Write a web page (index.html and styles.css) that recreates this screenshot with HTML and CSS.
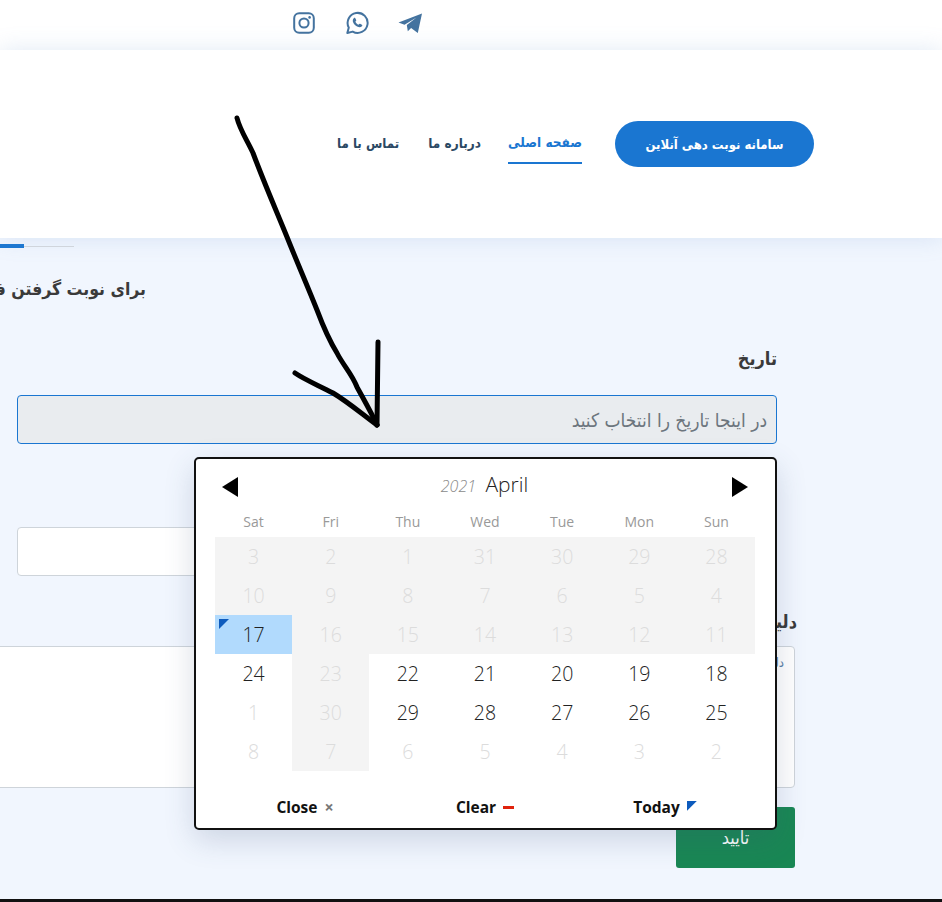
FILE: index.html
```html
<!DOCTYPE html>
<html lang="fa">
<head>
<meta charset="utf-8">
<title>سامانه نوبت دهی آنلاین</title>
<link rel="stylesheet" href="styles.css">
</head>
<body>
<div class="topbar">
  <svg class="social" viewBox="0 0 24 24" width="24" height="24"><rect x="2.2" y="2.2" width="19.6" height="19.6" rx="5" fill="none" stroke="#44739f" stroke-width="2"/><circle cx="12" cy="12" r="4.6" fill="none" stroke="#44739f" stroke-width="2"/><circle cx="17.6" cy="6.4" r="1.3" fill="#44739f"/></svg>
  <svg class="social" viewBox="0 0 24 24" width="24" height="24"><path d="M2.3 22l1.5-5.4A10 10 0 1 1 7.7 20.6z" fill="none" stroke="#44739f" stroke-width="2" stroke-linejoin="round"/><path d="M8.8 7.2c.4-.5 1.200-.5 1.500 0l.9 1.800c.2.400 0 .8-.8 1.700.7 1.400 1.600 2.300 3 3 .9-.9 1.300-1.100 1.700-.9l1.800.9c.5.300.5 1.100 0 1.500-1 1-2.500 1.300-4.200.6-2-.8-3.800-2.500-4.600-4.500-.6-1.600-.3-3.100.7-4.100z" fill="#44739f"/></svg>
  <svg class="social" viewBox="0 0 24 24" width="24" height="24"><path d="M0.500 11.500L24 2.500 19.800 22l-6.700-5-3.300 3.300-1-6.300L18.500 6.500 6.500 13.800z" fill="#44739f"/></svg>
</div>
<header class="header">
  <nav class="nav" dir="rtl">
    <a class="cta">سامانه نوبت دهی آنلاین</a>
    <a class="link active">صفحه اصلی</a>
    <a class="link">درباره ما</a>
    <a class="link">تماس با ما</a>
  </nav>
</header>
<main class="main">
  <div class="progress"><div class="progress-fill"></div></div>
  <div class="intro" dir="rtl">برای نوبت گرفتن فرم را پر کنید</div>
  <section class="field" dir="rtl">
    <div class="label">تاریخ</div>
    <div class="input readonly">در اینجا تاریخ را انتخاب کنید</div>
  </section>
  <section class="field second" dir="rtl">
    <div class="input"></div>
  </section>
  <section class="reason" dir="rtl">
    <div class="label">دلیل مراجعه</div>
    <div class="textarea">دلیل مراجعه خود را بنویسید</div>
    <a class="submit">تایید</a>
  </section>
</main>
<div class="bottomline"></div>

<div class="calendar">
  <div class="cal-head">
    <span class="tri tri-left"></span>
    <div class="cal-title"><em>2021</em> <span>April</span></div>
    <span class="tri tri-right"></span>
  </div>
  <div class="cal-grid">
    <div class="wd">Sat</div><div class="wd">Fri</div><div class="wd">Thu</div><div class="wd">Wed</div><div class="wd">Tue</div><div class="wd">Mon</div><div class="wd">Sun</div>
    <div class="d off">3</div><div class="d off">2</div><div class="d off">1</div><div class="d off">31</div><div class="d off">30</div><div class="d off">29</div><div class="d off">28</div>
    <div class="d off">10</div><div class="d off">9</div><div class="d off">8</div><div class="d off">7</div><div class="d off">6</div><div class="d off">5</div><div class="d off">4</div>
    <div class="d today">17</div><div class="d off">16</div><div class="d off">15</div><div class="d off">14</div><div class="d off">13</div><div class="d off">12</div><div class="d off">11</div>
    <div class="d">24</div><div class="d off">23</div><div class="d">22</div><div class="d">21</div><div class="d">20</div><div class="d">19</div><div class="d">18</div>
    <div class="d out">1</div><div class="d off">30</div><div class="d">29</div><div class="d">28</div><div class="d">27</div><div class="d">26</div><div class="d">25</div>
    <div class="d out">8</div><div class="d off">7</div><div class="d out">6</div><div class="d out">5</div><div class="d out">4</div><div class="d out">3</div><div class="d out">2</div>
  </div>
  <div class="cal-foot">
    <div class="btn">Close <span class="x">×</span></div>
    <div class="btn">Clear <span class="dash"></span></div>
    <div class="btn">Today <span class="corner"></span></div>
  </div>
</div>

<svg class="scribble" width="942" height="902" viewBox="0 0 942 902">
  <path d="M237 118C240 130 247 140 253 153C265 185 276 210 287 237C297 262 307 285 317 310C323 326 329 340 337 353C343 365 352 374 357 387C364 400 371 412 377 425" />
  <path d="M378 342L377 425" />
  <path d="M295 373C305 380 320 386 333 393C348 402 362 414 377 425" />
</svg>
</body>
</html>
```
FILE: styles.css
```css
* { box-sizing: border-box; }
html, body { margin: 0; padding: 0; height: 902px; overflow: hidden; }
body {
  width: 942px;
  position: relative;
  background: #f1f6fe;
  font-family: "DejaVu Sans Condensed", "DejaVu Sans", sans-serif;
  color: #3a3a3a;
}
.topbar {
  height: 50px;
  background: #fff;
  display: flex;
  align-items: flex-start;
  gap: 29px;
  padding: 11px 0 0 292px;
}
.social { display: block; }
.header {
  position: relative;
  z-index: 1;
  height: 188px;
  background: #fff;
  box-shadow: 0 0 22px rgba(120, 160, 210, 0.22);
  display: flex;
  justify-content: flex-end;
  padding: 71px 128px 0 0;
}
.nav {
  display: flex;
  align-items: flex-start;
  height: 46px;
  font-weight: 700;
  font-size: 13.5px;
}
.cta {
  width: 199px;
  height: 46px;
  border-radius: 23px;
  background: #1a76d1;
  color: #fff;
  display: flex;
  align-items: center;
  justify-content: center;
  margin-left: 33px;
  font-size: 13px;
}
.link {
  height: 43px;
  display: flex;
  align-items: center;
  padding-top: 1px;
  color: #2c4964;
  margin-left: 29px;
  font-size: 13.5px;
}
.link:last-child { font-size: 13.2px; }
.link.active {
  color: #1a76d1;
  border-bottom: 2px solid #1a76d1;
  margin-left: 27px;
}
.main { height: 661px; overflow: visible; }
.progress {
  position: relative;
  width: 74px;
  height: 1px;
  margin-top: 8px;
  background: #d5d9de;
}
.progress-fill {
  position: absolute;
  left: 0;
  top: -2px;
  width: 24px;
  height: 4px;
  background: #1a76d1;
}
.intro {
  width: 146px;
  margin-top: 32px;
  height: 20px;
  line-height: 20px;
  font-size: 17.5px;
  font-weight: 700;
  white-space: nowrap;
}
.field { margin: 49px 165px 0 17px; }
.label {
  font-size: 18px;
  font-weight: 700;
  line-height: 22px;
  height: 22px;
  white-space: nowrap;
}
.input {
  margin-top: 25px;
  height: 49px;
  border: 1px solid #ced4da;
  border-radius: 4px;
  background: #fff;
  padding: 0 9px;
  font-size: 19px;
  line-height: 49px;
  color: #6c757d;
}
.input.readonly { background: #e9ecef; border-color: #1a76d1; }
.second { margin-top: 83px; }
.second .input { margin-top: 0; }
.reason { margin: 35px 147px 0 -20px; }
.reason .label { margin-right: -2px; }
.textarea {
  margin-top: 13px;
  height: 142px;
  background: #fff;
  border: 1px solid #ced4da;
  border-radius: 4px;
  padding: 8px 10px;
  font-size: 13px;
  color: #5b7fa6;
  white-space: nowrap;
  overflow: hidden;
}
.submit {
  display: flex;
  align-items: center;
  justify-content: center;
  width: 119px;
  height: 61px;
  margin-top: 19px;
  border-radius: 3px;
  background: #198754;
  color: #fff;
  font-size: 18px;
}
.bottomline {
  position: absolute;
  left: 0;
  right: 0;
  bottom: 0;
  height: 3px;
  background: #111;
}
.calendar {
  position: absolute;
  z-index: 2;
  left: 194px;
  top: 457px;
  width: 583px;
  height: 373px;
  background: #fff;
  border: 2px solid #111;
  border-radius: 5px;
  box-shadow: 0 10px 30px rgba(60, 80, 120, 0.2);
  padding: 0 20px 0 19px;
  font-family: "Open Sans", "Noto Sans", sans-serif;
  color: #222;
}
.cal-head {
  display: flex;
  align-items: center;
  justify-content: space-between;
  height: 54px;
  padding: 2px 7px 0 7px;
}
.tri { display: block; width: 0; height: 0; border-top: 10px solid transparent; border-bottom: 10px solid transparent; }
.tri-left { border-right: 16px solid #000; }
.tri-right { border-left: 16px solid #000; }
.cal-title { font-size: 21px; font-weight: 300; color: #222; line-height: 26px; margin-top: -4px; margin-right: 1px; }
.cal-title em { font-size: 16px; color: #8a8a8a; margin-right: 4px; }
.cal-grid {
  display: grid;
  grid-template-columns: repeat(7, 1fr);
  grid-template-rows: 24px;
  grid-auto-rows: 39px;
}
.wd {
  height: 24px;
  font-size: 14px;
  color: #999;
  text-align: center;
  line-height: 17px;
}
.d {
  position: relative;
  text-align: center;
  font-size: 19.5px;
  font-weight: 300;
  line-height: 39px;
  color: #222;
}
.d.off { background: #f4f4f4; color: #dcdcdc; }
.d.out { color: #dcdcdc; }
.d.today { background: #b1dafd; color: #222; }
.d.today::before {
  content: "";
  position: absolute;
  left: 4px;
  top: 4px;
  width: 10px;
  height: 10px;
  background: #0d5bbd;
  clip-path: polygon(0 0, 100% 0, 0 100%);
}
.cal-foot {
  display: grid;
  grid-template-columns: repeat(3, 1fr);
  margin-top: 24px;
  font-size: 15.5px;
  font-weight: 700;
  color: #111;
  text-align: center;
}
.btn { display: flex; align-items: center; justify-content: center; gap: 7px; line-height: 24px; }
.x { color: #777; font-size: 16px; }
.dash { width: 11px; height: 3px; background: #e0230d; }
.corner {
  width: 10px;
  height: 10px;
  background: #0d5bbd;
  clip-path: polygon(0 0, 100% 0, 0 100%);
  margin-top: -2px;
}
.scribble {
  position: absolute;
  z-index: 3;
  left: 0;
  top: 0;
  pointer-events: none;
  fill: none;
  stroke: #000;
  stroke-width: 5;
  stroke-linecap: round;
  stroke-linejoin: round;
}
```
